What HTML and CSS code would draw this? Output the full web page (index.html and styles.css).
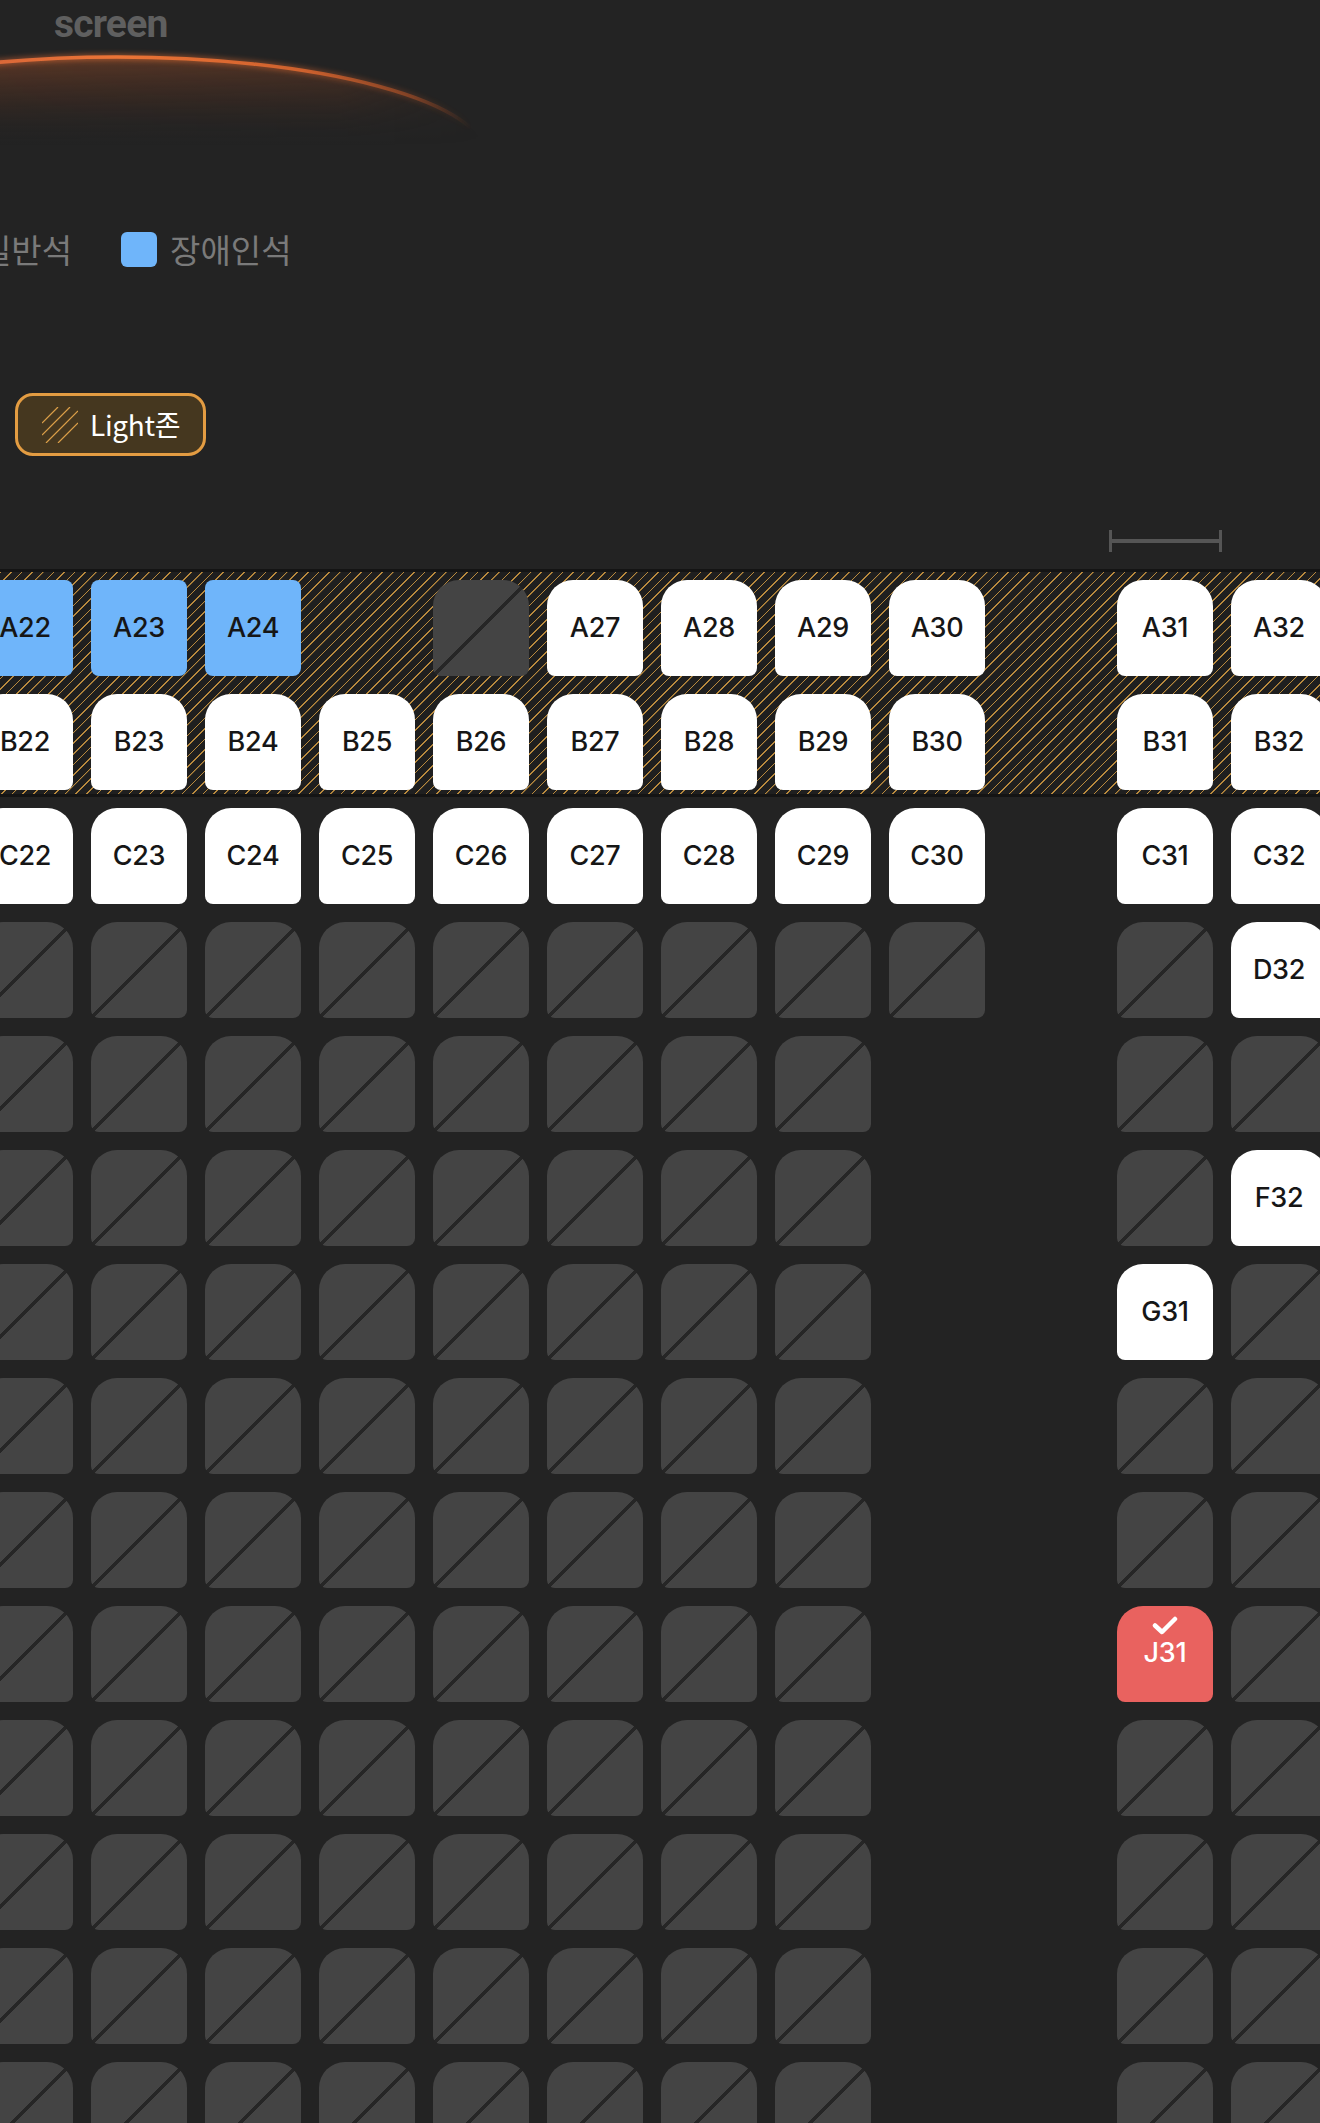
FILE: index.html
```html
<!DOCTYPE html>
<html lang="ko">
<head>
<meta charset="utf-8">
<title>좌석 선택</title>
<link rel="stylesheet" href="styles.css">
</head>
<body>
<div class="page">
  <header class="screen">
    <div class="screen-label">screen</div>
    <svg class="screen-arc" width="1320" height="115" viewBox="0 0 1320 115">
      <defs>
        <linearGradient id="glow" gradientUnits="userSpaceOnUse" x1="0" y1="12" x2="0" y2="100">
          <stop offset="0" stop-color="#b8582a" stop-opacity="0.4"/>
          <stop offset="0.5" stop-color="#7a3c20" stop-opacity="0.2"/>
          <stop offset="1" stop-color="#232323" stop-opacity="0"/>
        </linearGradient>
        <linearGradient id="arcfade" gradientUnits="userSpaceOnUse" x1="-253" y1="0" x2="487" y2="0">
          <stop offset="0.3" stop-color="#e0693a" stop-opacity="0.9"/>
          <stop offset="0.5" stop-color="#ec7436" stop-opacity="1"/>
          <stop offset="0.75" stop-color="#e0682f" stop-opacity="0.85"/>
          <stop offset="0.9" stop-color="#c95a28" stop-opacity="0.45"/>
          <stop offset="0.98" stop-color="#a04a22" stop-opacity="0"/>
        </linearGradient>
        <linearGradient id="glowfade" gradientUnits="userSpaceOnUse" x1="-253" y1="0" x2="487" y2="0">
          <stop offset="0.3" stop-color="#fff" stop-opacity="1"/>
          <stop offset="0.8" stop-color="#fff" stop-opacity="0.8"/>
          <stop offset="1" stop-color="#fff" stop-opacity="0"/>
        </linearGradient>
        <mask id="glowmask">
          <rect x="-300" y="0" width="900" height="115" fill="url(#glowfade)"/>
        </mask>
        <filter id="soft" x="-10%" y="-50%" width="120%" height="200%">
          <feGaussianBlur stdDeviation="2.5"/>
        </filter>
      </defs>
      <ellipse cx="117" cy="112" rx="370" ry="100" fill="url(#glow)" mask="url(#glowmask)"/>
      <path d="M -253 112 A 370 100 0 0 1 487 112" fill="none" stroke="url(#arcfade)" stroke-width="7" opacity="0.45" filter="url(#soft)"/>
      <path d="M -253 112 A 370 100 0 0 1 487 112" fill="none" stroke="url(#arcfade)" stroke-width="3.5"/>
    </svg>
  </header>

  <div class="legend">
    <span class="legend-item"><span class="swatch swatch-general"></span>일반석</span>
    <span class="legend-item"><span class="swatch swatch-access"></span>장애인석</span>
  </div>

  <div class="zones">
    <button class="zone-btn" type="button">
      <svg class="zone-icon" width="36" height="36" viewBox="0 0 36 36">
        <g stroke="#dca049" stroke-width="1.2">
          <line x1="0" y1="16" x2="16" y2="0"/>
          <line x1="0" y1="28" x2="28" y2="0"/>
          <line x1="4" y1="36" x2="36" y2="4"/>
          <line x1="16" y1="36" x2="36" y2="16"/>
        </g>
      </svg>
      <span class="zone-label">Light존</span>
    </button>
  </div>

  <div class="aisle-row"><span class="aisle-marker"></span></div>

  <div class="seatmap">
    <div class="light-zone">
      <div class="row">
        <div class="seat seat-access">A22</div>
        <div class="seat seat-access">A23</div>
        <div class="seat seat-access">A24</div>
        <div class="seat seat-none"></div>
        <div class="seat seat-off"></div>
        <div class="seat">A27</div>
        <div class="seat">A28</div>
        <div class="seat">A29</div>
        <div class="seat">A30</div>
        <div class="seat seat-none"></div>
        <div class="seat">A31</div>
        <div class="seat">A32</div>
      </div>
      <div class="row">
        <div class="seat">B22</div>
        <div class="seat">B23</div>
        <div class="seat">B24</div>
        <div class="seat">B25</div>
        <div class="seat">B26</div>
        <div class="seat">B27</div>
        <div class="seat">B28</div>
        <div class="seat">B29</div>
        <div class="seat">B30</div>
        <div class="seat seat-none"></div>
        <div class="seat">B31</div>
        <div class="seat">B32</div>
      </div>
    </div>

    <div class="rows">
      <div class="row">
        <div class="seat">C22</div>
        <div class="seat">C23</div>
        <div class="seat">C24</div>
        <div class="seat">C25</div>
        <div class="seat">C26</div>
        <div class="seat">C27</div>
        <div class="seat">C28</div>
        <div class="seat">C29</div>
        <div class="seat">C30</div>
        <div class="seat seat-none"></div>
        <div class="seat">C31</div>
        <div class="seat">C32</div>
      </div>
      <div class="row">
        <div class="seat seat-off"></div><div class="seat seat-off"></div><div class="seat seat-off"></div>
        <div class="seat seat-off"></div><div class="seat seat-off"></div><div class="seat seat-off"></div>
        <div class="seat seat-off"></div><div class="seat seat-off"></div><div class="seat seat-off"></div>
        <div class="seat seat-none"></div>
        <div class="seat seat-off"></div>
        <div class="seat">D32</div>
      </div>
      <div class="row">
        <div class="seat seat-off"></div><div class="seat seat-off"></div><div class="seat seat-off"></div>
        <div class="seat seat-off"></div><div class="seat seat-off"></div><div class="seat seat-off"></div>
        <div class="seat seat-off"></div><div class="seat seat-off"></div><div class="seat seat-none"></div>
        <div class="seat seat-none"></div>
        <div class="seat seat-off"></div>
        <div class="seat seat-off"></div>
      </div>
      <div class="row">
        <div class="seat seat-off"></div><div class="seat seat-off"></div><div class="seat seat-off"></div>
        <div class="seat seat-off"></div><div class="seat seat-off"></div><div class="seat seat-off"></div>
        <div class="seat seat-off"></div><div class="seat seat-off"></div><div class="seat seat-none"></div>
        <div class="seat seat-none"></div>
        <div class="seat seat-off"></div>
        <div class="seat">F32</div>
      </div>
      <div class="row">
        <div class="seat seat-off"></div><div class="seat seat-off"></div><div class="seat seat-off"></div>
        <div class="seat seat-off"></div><div class="seat seat-off"></div><div class="seat seat-off"></div>
        <div class="seat seat-off"></div><div class="seat seat-off"></div><div class="seat seat-none"></div>
        <div class="seat seat-none"></div>
        <div class="seat">G31</div>
        <div class="seat seat-off"></div>
      </div>
      <div class="row">
        <div class="seat seat-off"></div><div class="seat seat-off"></div><div class="seat seat-off"></div>
        <div class="seat seat-off"></div><div class="seat seat-off"></div><div class="seat seat-off"></div>
        <div class="seat seat-off"></div><div class="seat seat-off"></div><div class="seat seat-none"></div>
        <div class="seat seat-none"></div>
        <div class="seat seat-off"></div>
        <div class="seat seat-off"></div>
      </div>
      <div class="row">
        <div class="seat seat-off"></div><div class="seat seat-off"></div><div class="seat seat-off"></div>
        <div class="seat seat-off"></div><div class="seat seat-off"></div><div class="seat seat-off"></div>
        <div class="seat seat-off"></div><div class="seat seat-off"></div><div class="seat seat-none"></div>
        <div class="seat seat-none"></div>
        <div class="seat seat-off"></div>
        <div class="seat seat-off"></div>
      </div>
      <div class="row">
        <div class="seat seat-off"></div><div class="seat seat-off"></div><div class="seat seat-off"></div>
        <div class="seat seat-off"></div><div class="seat seat-off"></div><div class="seat seat-off"></div>
        <div class="seat seat-off"></div><div class="seat seat-off"></div><div class="seat seat-none"></div>
        <div class="seat seat-none"></div>
        <div class="seat seat-selected">
          <svg class="check" width="28" height="20" viewBox="0 0 28 20"><path d="M4 9.5 L11 16 L24 3" fill="none" stroke="#fff" stroke-width="4.5" stroke-linecap="round" stroke-linejoin="round"/></svg>
          <span>J31</span>
        </div>
        <div class="seat seat-off"></div>
      </div>
      <div class="row">
        <div class="seat seat-off"></div><div class="seat seat-off"></div><div class="seat seat-off"></div>
        <div class="seat seat-off"></div><div class="seat seat-off"></div><div class="seat seat-off"></div>
        <div class="seat seat-off"></div><div class="seat seat-off"></div><div class="seat seat-none"></div>
        <div class="seat seat-none"></div>
        <div class="seat seat-off"></div>
        <div class="seat seat-off"></div>
      </div>
      <div class="row">
        <div class="seat seat-off"></div><div class="seat seat-off"></div><div class="seat seat-off"></div>
        <div class="seat seat-off"></div><div class="seat seat-off"></div><div class="seat seat-off"></div>
        <div class="seat seat-off"></div><div class="seat seat-off"></div><div class="seat seat-none"></div>
        <div class="seat seat-none"></div>
        <div class="seat seat-off"></div>
        <div class="seat seat-off"></div>
      </div>
      <div class="row">
        <div class="seat seat-off"></div><div class="seat seat-off"></div><div class="seat seat-off"></div>
        <div class="seat seat-off"></div><div class="seat seat-off"></div><div class="seat seat-off"></div>
        <div class="seat seat-off"></div><div class="seat seat-off"></div><div class="seat seat-none"></div>
        <div class="seat seat-none"></div>
        <div class="seat seat-off"></div>
        <div class="seat seat-off"></div>
      </div>
      <div class="row">
        <div class="seat seat-off"></div><div class="seat seat-off"></div><div class="seat seat-off"></div>
        <div class="seat seat-off"></div><div class="seat seat-off"></div><div class="seat seat-off"></div>
        <div class="seat seat-off"></div><div class="seat seat-off"></div><div class="seat seat-none"></div>
        <div class="seat seat-none"></div>
        <div class="seat seat-off"></div>
        <div class="seat seat-off"></div>
      </div>
    </div>
  </div>
</div>
</body>
</html>
```

FILE: styles.css
```css
* { box-sizing: border-box; }

html, body {
  margin: 0;
  padding: 0;
  background: #232323;
  overflow: hidden;
}

body {
  font-family: "Noto Sans CJK KR", "Noto Sans", sans-serif;
}

.page {
  width: 1320px;
  height: 2123px;
  overflow: hidden;
  background: #232323;
}

/* screen */
.screen-label {
  height: 45px;
  padding: 2px 0 0 54px;
  font-family: Roboto, "Liberation Sans", sans-serif;
  font-weight: 700;
  font-size: 39px;
  line-height: 44px;
  letter-spacing: -0.8px;
  color: #5f5f5f;
}

.screen-arc {
  display: block;
}

/* legend */
.legend {
  display: flex;
  align-items: center;
  gap: 49px;
  height: 50px;
  margin: 64px 0 0 -68px;
}

.legend-item {
  display: flex;
  align-items: center;
  gap: 13px;
  font-size: 33px;
  line-height: 50px;
  color: #7a7a7a;
  white-space: nowrap;
}

.swatch {
  width: 36px;
  height: 35px;
  border-radius: 6px;
}

.swatch-general { background: #ffffff; }
.swatch-access { background: #6fb5fa; }

/* zones */
.zones {
  display: flex;
  margin: 119px 0 0 15px;
}

.zone-btn {
  display: flex;
  align-items: center;
  gap: 12px;
  width: 191px;
  height: 63px;
  padding: 0 0 0 24px;
  border: 3px solid #e39c42;
  border-radius: 18px;
  background: #45371f;
  color: #ffffff;
  font-family: "Noto Sans CJK KR", "Noto Sans", sans-serif;
  font-size: 28px;
  cursor: pointer;
}

.zone-icon { display: block; flex: none; }

.zone-label {
  line-height: 1;
  margin-top: -2px;
  letter-spacing: -0.3px;
}

/* aisle marker */
.aisle-row {
  display: flex;
  margin: 74px 0 0 1109px;
}

.aisle-marker {
  position: relative;
  width: 113px;
  height: 22px;
  border-left: 3px solid #555555;
  border-right: 3px solid #555555;
}

.aisle-marker::before {
  content: "";
  position: absolute;
  left: 0;
  right: 0;
  top: 9px;
  height: 4px;
  background: #555555;
}

/* seat map */
.seatmap {
  margin-top: 17px;
}

.light-zone {
  display: flex;
  flex-direction: column;
  gap: 18px;
  padding: 8px 0 4px;
  border-top: 3px solid #141414;
  border-bottom: 3px solid #141414;
  background-color: #1f1f1f;
  background-image: repeating-linear-gradient(135deg, #b98a3e 0, #b98a3e 1px, #1f1f1f 1.2px, #1f1f1f 7.5px);
}

.rows {
  display: flex;
  flex-direction: column;
  gap: 18px;
  margin-top: 11px;
}

.row {
  display: flex;
  gap: 18px;
  margin-left: -23px;
}

.seat {
  flex: none;
  width: 96px;
  height: 96px;
  display: flex;
  align-items: center;
  justify-content: center;
  padding-bottom: 2px;
  border-radius: 26px 26px 8px 8px;
  background: #ffffff;
  color: #161616;
  font-family: Inter, "Noto Sans", sans-serif;
  font-weight: 500;
  font-size: 27px;
  letter-spacing: -0.3px;
}

.seat-access {
  background: #6fb5fa;
  border-radius: 8px;
}

.seat-none {
  visibility: hidden;
}

.seat-off {
  background-color: #444444;
  background-image: linear-gradient(to bottom right, transparent calc(50% - 1.6px), #262626 calc(50% - 1.6px), #262626 calc(50% + 1.6px), transparent calc(50% + 1.6px));
}

.seat-selected {
  flex-direction: column;
  justify-content: flex-start;
  gap: 3px;
  padding: 10px 0 0;
  background: #e9625f;
  color: #ffffff;
  line-height: 27px;
}

.check { display: block; }
```
